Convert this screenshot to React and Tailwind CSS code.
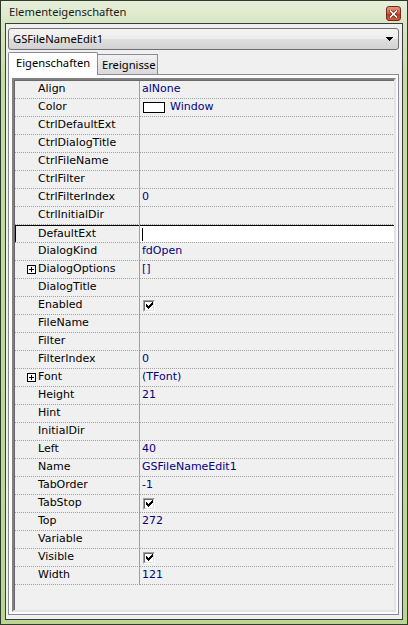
const props = [
  { name: 'Align', value: 'alNone' },
  { name: 'Color', value: 'Window', swatch: true },
  { name: 'CtrlDefaultExt' },
  { name: 'CtrlDialogTitle' },
  { name: 'CtrlFileName' },
  { name: 'CtrlFilter' },
  { name: 'CtrlFilterIndex', value: '0' },
  { name: 'CtrlInitialDir' },
  { name: 'DefaultExt', editing: true },
  { name: 'DialogKind', value: 'fdOpen' },
  { name: 'DialogOptions', value: '[]', expand: true },
  { name: 'DialogTitle' },
  { name: 'Enabled', check: true },
  { name: 'FileName' },
  { name: 'Filter' },
  { name: 'FilterIndex', value: '0' },
  { name: 'Font', value: '(TFont)', expand: true },
  { name: 'Height', value: '21' },
  { name: 'Hint' },
  { name: 'InitialDir' },
  { name: 'Left', value: '40' },
  { name: 'Name', value: 'GSFileNameEdit1' },
  { name: 'TabOrder', value: '-1' },
  { name: 'TabStop', check: true },
  { name: 'Top', value: '272' },
  { name: 'Variable' },
  { name: 'Visible', check: true },
  { name: 'Width', value: '121' },
];

const dots = 'h-px bg-[repeating-linear-gradient(90deg,#a0a0a0_0px,#a0a0a0_1px,transparent_1px,transparent_2px)]';

function PlusBox() {
  return (
    <svg width="9" height="9" viewBox="0 0 9 9" shapeRendering="crispEdges" className="shrink-0">
      <rect x="0.5" y="0.5" width="8" height="8" fill="#fff" stroke="#000" />
      <rect x="2" y="4" width="5" height="1" fill="#000" />
      <rect x="4" y="2" width="1" height="5" fill="#000" />
    </svg>
  );
}

function CheckBox() {
  return (
    <div className="w-[12px] h-[12px] border border-t-[#a0a0a0] border-l-[#a0a0a0] border-r-white border-b-white">
      <div className="w-full h-full bg-white border border-t-[#696969] border-l-[#696969] border-r-[#e3e3e3] border-b-[#e3e3e3] flex items-center justify-center">
        <svg width="7" height="7" viewBox="0 0 7 7" shapeRendering="crispEdges">
          <path d="M6 0h1v3h-1v1h-1v1h-1v1h-1v1h-1v-1h-1v-1h-1v-3h1v1h1v1h1v-1h1v-1h1z" fill="#000" />
        </svg>
      </div>
    </div>
  );
}

function PropRow({ p }) {
  return (
    <div className="flex h-[18px]">
      <div className="w-[125px] shrink-0 flex flex-col border-r border-[#a0a0a0]">
        <div
          className={`h-[17px] flex items-center ${
            p.editing ? 'border-t border-l border-black pl-[22px]' : p.expand ? 'pl-[12px] gap-[2px]' : 'pl-[23px]'
          }`}
        >
          {p.expand && <PlusBox />}
          <span className="text-black whitespace-nowrap">{p.name}</span>
        </div>
        <div className={dots} />
      </div>
      <div className="flex-1 flex flex-col">
        <div className={`h-[17px] flex items-center ${p.editing ? 'bg-white border-t border-black pl-[2px]' : 'pl-[2px]'}`}>
          {p.editing && <div className="w-px h-[13px] bg-black" />}
          {p.check && <div className="ml-[1px]"><CheckBox /></div>}
          {p.swatch && <div className="ml-[1px] mr-[5px] w-[22px] h-[11px] border border-black bg-white" />}
          {p.value && <span className="text-[#000080] whitespace-nowrap">{p.value}</span>}
        </div>
        <div className={dots} />
      </div>
    </div>
  );
}

export default function App() {
  return (
    <div
      className="w-[408px] h-[625px] flex flex-col border border-[#2f3b2a] bg-[linear-gradient(180deg,#e8efdd_0px,#d8e7c3_22px,#c4dca3_80px,#bad692_100%)] font-['Noto_Sans',sans-serif] text-[11.2px] text-black"
    >
      {/* title bar */}
      <div className="h-[22px] shrink-0 flex items-start justify-between pl-[8px] pr-[6px]">
        <span className="mt-[4px] leading-[14px] text-[#1a1a1a]">Elementeigenschaften</span>
        <div className="mt-[5px] w-[15px] h-[15px] rounded-[3px] border border-[#6e2b1f] bg-[linear-gradient(180deg,#e89580_0%,#d96448_45%,#c23a20_55%,#cf5a3e_100%)] flex items-center justify-center">
          <svg width="9" height="8" viewBox="0 0 9 8">
            <path d="M1.5 1 L7.5 7 M7.5 1 L1.5 7" stroke="#5a2418" strokeWidth="3" strokeLinecap="square" />
            <path d="M1.5 1 L7.5 7 M7.5 1 L1.5 7" stroke="#fff" strokeWidth="1.6" strokeLinecap="square" />
          </svg>
        </div>
      </div>

      {/* client area */}
      <div className="flex-1 mx-[4px] mb-[4px] border border-[#3b3b3b] bg-[#f0f0f0] flex flex-col">
        {/* component selector */}
        <div className="mt-[4px] ml-[2px] mr-[3px] h-[22px] rounded-[3px] border border-[#707070] bg-[linear-gradient(180deg,#f4f4f4_0%,#ececec_50%,#dedede_51%,#d2d2d2_100%)] flex items-center justify-between pl-[4px] pr-[5px]">
          <span>GSFileNameEdit1</span>
          <svg width="7" height="4" viewBox="0 0 7 4" shapeRendering="crispEdges">
            <path d="M0 0h7l-3.5 4z" fill="#000" />
          </svg>
        </div>

        {/* tabs */}
        <div className="mt-[2px] ml-[2px] h-[22px] flex items-end relative z-10">
          <div className="w-[90px] h-[23px] -mb-[1px] bg-white border border-b-0 border-[#898c95] rounded-t-[2px] pl-[7px] pt-[2px] leading-[16px]">
            Eigenschaften
          </div>
          <div className="w-[60px] h-[20px] border border-l-0 border-b-0 border-[#898c95] bg-[linear-gradient(180deg,#f2f2f2_0%,#e4e4e4_50%,#d9d9d9_100%)] pl-[4px] pt-[2px] leading-[16px]">
            Ereignisse
          </div>
        </div>

        {/* tab page */}
        <div className="flex-1 ml-[2px] mr-[3px] mb-[4px] border border-[#898c95] bg-[#fcfcfc] pl-[3px] pt-[3px] pr-[2px] pb-[2px] flex">
          <div className="flex-1 border-2 border-t-[#808080] border-l-[#808080] border-r-[#e3e3e3] border-b-[#e3e3e3] flex">
            <div className="flex-1 border-t border-l border-t-[#696969] border-l-[#696969] bg-[#f0f0f0] font-['DejaVu_Sans',sans-serif] text-[11px] flex flex-col">
              {props.map((p) => (
                <PropRow key={p.name} p={p} />
              ))}
            </div>
          </div>
        </div>
      </div>
    </div>
  );
}
